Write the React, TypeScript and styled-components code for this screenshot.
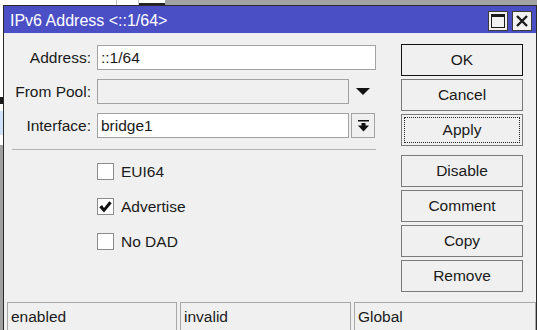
import React from 'react';
import styled, { createGlobalStyle } from 'styled-components';

const GlobalStyle = createGlobalStyle`
  html, body {
    margin: 0;
    padding: 0;
    background: #ffffff;
  }
  body {
    font-family: 'Liberation Sans', Arial, sans-serif;
  }
`;

const Desktop = styled.div`
  width: 537px;
  height: 330px;
  overflow: hidden;
  display: flex;
  flex-direction: column;
  background: #ffffff;
`;

const TopStrip = styled.div`
  height: 5px;
  flex-shrink: 0;
  display: flex;
`;

const StripCell = styled.div<{ $w: number; $bg?: string; $line?: boolean }>`
  width: ${(p) => p.$w}px;
  flex-shrink: 0;
  height: 100%;
  background: ${(p) => p.$bg || '#ffffff'};
  border-right: ${(p) => (p.$line ? '1px solid #c8c8c8' : 'none')};
  box-sizing: border-box;
`;

const StripFill = styled.div`
  flex: 1;
  background: #a3a3a3;
`;

const Stage = styled.div`
  flex: 1;
  display: flex;
`;

const BehindStrip = styled.div`
  width: 3px;
  flex-shrink: 0;
  background: linear-gradient(
    to bottom,
    #ffffff 0 92px,
    #1a1a1a 92px 99px,
    #ffffff 99px 106px,
    #cfe2f7 106px 130px,
    #ffffff 130px 140px,
    #a0a0a0 140px
  );
`;

const Window = styled.div`
  width: 534px;
  flex-shrink: 0;
  box-sizing: border-box;
  border: 1px solid #2a2a2a;
  border-bottom: none;
  display: flex;
  flex-direction: column;
  background: #f0f0f0;
`;

const TitleBar = styled.div`
  height: 28px;
  box-sizing: border-box;
  padding: 3px 4px 0 6px;
  background: #4a4fc6;
  display: flex;
  align-items: center;
  border-bottom: 1px solid #e8eaf6;
`;

const Title = styled.div`
  flex: 1;
  color: #ffffff;
  font-size: 16px;
  white-space: nowrap;
`;

const TitleButtons = styled.div`
  display: flex;
  gap: 4px;
`;

const TitleButton = styled.div`
  width: 20px;
  height: 20px;
  box-sizing: border-box;
  border: 1px solid #3a3a3a;
  background: #f2f2f2;
  display: flex;
  align-items: center;
  justify-content: center;
`;

const Body = styled.div`
  height: 268px;
  display: flex;
  flex-shrink: 0;
`;

const FormColumn = styled.div`
  width: 397px;
  padding-top: 11px;
  box-sizing: border-box;
  display: flex;
  flex-direction: column;
`;

const FieldRow = styled.div`
  display: flex;
  align-items: center;
  height: 25px;
  margin-bottom: 9px;
`;

const Label = styled.div`
  width: 87px;
  margin-right: 6px;
  text-align: right;
  font-size: 15.5px;
  color: #1a1a1a;
  white-space: nowrap;
`;

const Field = styled.div<{ $w: number; $disabled?: boolean }>`
  width: ${(p) => p.$w}px;
  height: 25px;
  box-sizing: border-box;
  border: 1px solid #a2a2a2;
  background: ${(p) => (p.$disabled ? '#f0f0f0' : '#ffffff')};
  font-size: 15.5px;
  color: #1a1a1a;
  padding-left: 3px;
  display: flex;
  align-items: center;
`;

const ArrowSlot = styled.div`
  width: 27px;
  height: 25px;
  display: flex;
  align-items: center;
  justify-content: center;
`;

const DropButton = styled.div`
  width: 24px;
  height: 25px;
  margin-left: 2px;
  box-sizing: border-box;
  border: 1px solid #a2a2a2;
  background: #f0f0f0;
  display: flex;
  align-items: center;
  justify-content: center;
`;

const Separator = styled.div`
  margin: 2px 0 0 8px;
  width: 364px;
  height: 1px;
  background: #b4b4b4;
`;

const CheckList = styled.div`
  padding: 13px 0 0 93px;
  display: flex;
  flex-direction: column;
  gap: 18px;
`;

const CheckRow = styled.div`
  display: flex;
  align-items: center;
  height: 17px;
`;

const Box = styled.div`
  width: 17px;
  height: 17px;
  box-sizing: border-box;
  border: 1px solid #8c8c8c;
  background: #ffffff;
  margin-right: 7px;
  display: flex;
  align-items: center;
  justify-content: center;
`;

const CheckText = styled.div`
  font-size: 15.5px;
  color: #1a1a1a;
`;

const ButtonColumn = styled.div`
  width: 122px;
  padding-top: 10px;
  display: flex;
  flex-direction: column;
  gap: 3px;
`;

const Button = styled.div<{ $default?: boolean; $gapTop?: boolean }>`
  height: 32px;
  box-sizing: border-box;
  border: 1px solid ${(p) => (p.$default ? '#111111' : '#7a7a7a')};
  background: #f0f0f0;
  margin-top: ${(p) => (p.$gapTop ? '6px' : '0')};
  padding: 2px;
  font-size: 15.5px;
  color: #1a1a1a;
  display: flex;
`;

const ButtonFace = styled.div<{ $focus?: boolean }>`
  flex: 1;
  border: 1px dotted ${(p) => (p.$focus ? '#222222' : 'transparent')};
  display: flex;
  align-items: center;
  justify-content: center;
`;

const StatusBar = styled.div`
  display: flex;
  padding-left: 3px;
  flex: 1;
`;

const StatusCell = styled.div<{ $w?: number; $mr: number }>`
  ${(p) => (p.$w ? `width: ${p.$w}px;` : 'flex: 1;')}
  margin-right: ${(p) => p.$mr}px;
  box-sizing: border-box;
  border: 1px solid #a8a8a8;
  border-bottom: none;
  padding: 5px 0 0 3px;
  font-size: 15.5px;
  color: #1a1a1a;
  height: 30px;
`;

const MaxIcon = () => (
  <svg width="14" height="14" viewBox="0 0 14 14">
    <rect x="0.5" y="0.5" width="13" height="13" fill="none" stroke="#1a1a1a" strokeWidth="1" />
    <rect x="0" y="0" width="14" height="3" fill="#1a1a1a" />
  </svg>
);

const CloseIcon = () => (
  <svg width="14" height="14" viewBox="0 0 14 14">
    <path d="M2 2 L12 12 M12 2 L2 12" stroke="#1a1a1a" strokeWidth="2.4" />
  </svg>
);

const DownTriangle = () => (
  <svg width="14" height="8" viewBox="0 0 14 8">
    <polygon points="0,0 14,0 7,7" fill="#111111" />
  </svg>
);

const DropIcon = () => (
  <svg width="11" height="12" viewBox="0 0 11 12">
    <rect x="0" y="0" width="11" height="1.5" fill="#111111" />
    <rect x="3.5" y="3" width="4" height="3" fill="#111111" />
    <polygon points="0,5.5 11,5.5 5.5,11.5" fill="#111111" />
  </svg>
);

const CheckMark = () => (
  <svg width="13" height="12" viewBox="0 0 13 12">
    <path d="M0.3 6.2 L3 4 L5 7 L10.3 0.3 L12.7 2.2 L5 11.5 Z" fill="#111111" />
  </svg>
);

const checks = [
  { label: 'EUI64', checked: false },
  { label: 'Advertise', checked: true },
  { label: 'No DAD', checked: false },
];

const actions = ['Disable', 'Comment', 'Copy', 'Remove'];

const App: React.FC = () => {
  return (
    <>
      <GlobalStyle />
      <Desktop>
        <TopStrip>
          <StripCell $w={117} $line />
          <StripCell $w={22} $line />
          <StripCell $w={26} $bg="linear-gradient(to bottom, #fff 0 3px, #222 3px)" />
          <StripFill />
        </TopStrip>
        <Stage>
          <BehindStrip />
          <Window>
            <TitleBar>
              <Title>IPv6 Address &lt;::1/64&gt;</Title>
              <TitleButtons>
                <TitleButton>
                  <MaxIcon />
                </TitleButton>
                <TitleButton>
                  <CloseIcon />
                </TitleButton>
              </TitleButtons>
            </TitleBar>
            <Body>
              <FormColumn>
                <FieldRow>
                  <Label>Address:</Label>
                  <Field $w={279}>::1/64</Field>
                </FieldRow>
                <FieldRow>
                  <Label>From Pool:</Label>
                  <Field $w={252} $disabled />
                  <ArrowSlot>
                    <DownTriangle />
                  </ArrowSlot>
                </FieldRow>
                <FieldRow>
                  <Label>Interface:</Label>
                  <Field $w={252}>bridge1</Field>
                  <DropButton>
                    <DropIcon />
                  </DropButton>
                </FieldRow>
                <Separator />
                <CheckList>
                  {checks.map((c) => (
                    <CheckRow key={c.label}>
                      <Box>{c.checked && <CheckMark />}</Box>
                      <CheckText>{c.label}</CheckText>
                    </CheckRow>
                  ))}
                </CheckList>
              </FormColumn>
              <ButtonColumn>
                <Button $default>
                  <ButtonFace>OK</ButtonFace>
                </Button>
                <Button>
                  <ButtonFace>Cancel</ButtonFace>
                </Button>
                <Button>
                  <ButtonFace $focus>Apply</ButtonFace>
                </Button>
                {actions.map((a, i) => (
                  <Button key={a} $gapTop={i === 0}>
                    <ButtonFace>{a}</ButtonFace>
                  </Button>
                ))}
              </ButtonColumn>
            </Body>
            <StatusBar>
              <StatusCell $w={170} $mr={3}>enabled</StatusCell>
              <StatusCell $w={171} $mr={3}>invalid</StatusCell>
              <StatusCell $mr={0}>Global</StatusCell>
            </StatusBar>
          </Window>
        </Stage>
      </Desktop>
    </>
  );
};

export default App;
